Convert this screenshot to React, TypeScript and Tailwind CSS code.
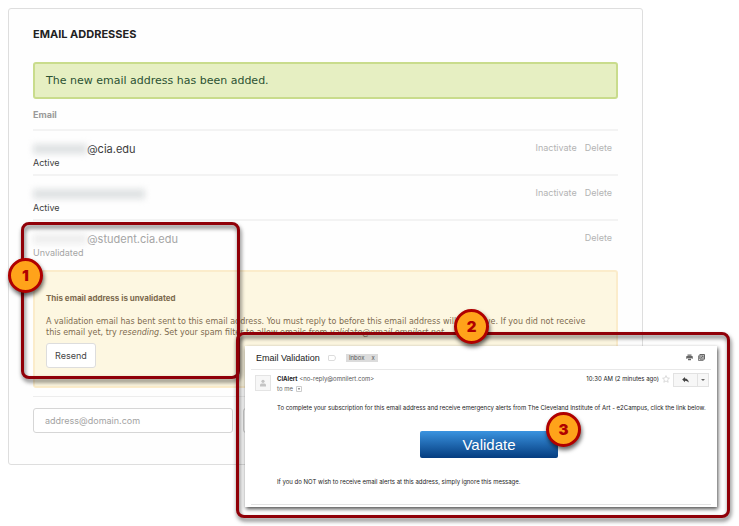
import type { ReactNode } from "react";
import clsx from "clsx";

const emails = [
  { id: 1, domain: "@cia.edu", status: "Active", actions: ["Inactivate", "Delete"] },
  { id: 2, domain: "", status: "Active", actions: ["Inactivate", "Delete"] },
  { id: 3, domain: "@student.cia.edu", status: "Unvalidated", actions: ["Delete"] }
];

function Badge({ children, className }: { children: ReactNode; className: string }) {
  return (
    <div
      className={clsx(
        "absolute flex size-[35px] items-center justify-center rounded-full border-3 border-[#b00000] bg-[#ffa31a] font-[Inter,sans-serif] text-[15px] leading-none font-black text-[#b00000] shadow-[1px_3px_4px_rgba(0,0,0,0.6)]",
        className
      )}
    >
      {children}
    </div>
  );
}

function EmailTable() {
  return (
    <table className="w-full table-fixed border-collapse text-left">
      <thead>
        <tr className="h-[31px] border-b-2 border-[#f3f3f3]">
          <th className="pt-[2px] text-[9px] font-bold text-[#9a9a9a]">Email</th>
          <th className="w-28" aria-label="Actions" />
        </tr>
      </thead>
      <tbody>
        {emails.map((email) => {
          const muted = email.status === "Unvalidated";
          return (
            <tr key={email.id} className={clsx("h-[45px] align-top", !muted && "border-b-2 border-[#f3f3f3]")}>
              <td className={clsx("pt-[11px]", muted ? "text-[#a5a5a5]" : "text-[#3c3c3c]")}>
                <div className="flex h-[14px] items-center text-[11px] leading-[14px]">
                  <span
                    className={clsx(
                      "h-[10px] blur-[3px]",
                      email.domain ? "w-[54px]" : "w-28",
                      muted ? "bg-[#eeeeee]" : "bg-[#dfe2e3]"
                    )}
                  />
                  {email.domain}
                </div>
                <div className="text-[9px] leading-[13px]">{email.status}</div>
              </td>
              <td className="pt-[10px] pr-[6px]">
                <div className="flex justify-end gap-2 text-[9px] leading-[14px] text-[#b3b3b3]">
                  {email.actions.map((action) => (
                    <button key={action} type="button">{action}</button>
                  ))}
                </div>
              </td>
            </tr>
          );
        })}
      </tbody>
    </table>
  );
}

function EmailMessage() {
  return (
    <article className="relative bg-white px-[6px] pb-[2px] text-[6px] text-[#222] shadow-[1px_2px_4px_rgba(0,0,0,0.7)]">
      <header className="flex h-6 items-center border-b border-[#e8e8e8] pr-[6px] pl-[5px]">
        <h2 className="font-['Liberation_Sans',Arial,sans-serif] text-[9px] leading-3">Email Validation</h2>
        <svg className="ml-[8px] h-[6px] w-2" viewBox="0 0 8 6" fill="none" stroke="#dcdcdc">
          <path d="M1 .5h5q1 0 1.500 2.500-.5 2.500-1.500 2.500H1q-.5 0-.5-.5V1q0-.5.5-.5z" />
        </svg>
        <span className="ml-[10px] flex h-2 items-center gap-[7px] bg-[#dcdcdc] px-[3px] text-[#555]">
          Inbox
          <button type="button" aria-label="Remove Inbox label">x</button>
        </span>
        <span className="ml-auto flex gap-[5px]">
          <button type="button" aria-label="Print">
            <svg className="size-[7px]" viewBox="0 0 7 7" fill="#666">
              <path d="M1.5 .6h4v1.100h-4zM.9 2h5.200q.7 0 .7.7v2.100H5.500V3.900h-4v.9H.2V2.700Q.2 2 .9 2zM2 4.400h3v1.900H2z" />
            </svg>
          </button>
          <button type="button" aria-label="Open in new window">
            <svg className="size-[7px]" viewBox="0 0 7 7" fill="none" stroke="#666">
              <path d="M.5 1.500v5h5" strokeWidth=".8" />
              <path d="M1.800.5h4.700v4.700H1.800z" fill="#bbb" />
              <path d="M3 4l2-2M3.500 2H5v1.500" strokeWidth=".8" />
            </svg>
          </button>
        </span>
      </header>

      <div className="flex pt-1 pr-[2px] pl-1">
        <div className="mt-px flex size-4 items-center justify-center border border-[#e4e4e4] bg-[#f7f7f7]">
          <svg className="size-2" viewBox="0 0 8 8" fill="#c4c4c4">
            <circle cx="4" cy="2.3" r="1.6" />
            <path d="M1 7.500V6q0-1.500 1.500-1.500h3q1.500 0 1.500 1.500v1.500z" />
          </svg>
        </div>
        <div className="ml-[6px] leading-[10px]">
          <p><b>CIAlert</b> <span className="text-[#555]">&lt;no-reply@omnilert.com&gt;</span></p>
          <p className="flex items-center gap-[3px] text-[#666]">
            to me
            <button type="button" aria-label="Show details">
              <svg className="size-[6px]" viewBox="0 0 6 6" fill="none" stroke="#ccc">
                <path d="M.5 .5h5v5h-5z" />
                <path d="M1.800 2.300h2.400L3 3.900z" fill="#666" stroke="none" />
              </svg>
            </button>
          </p>
        </div>
        <span className="ml-auto leading-[10px]">10:30 AM (2 minutes ago)</span>
        <button type="button" aria-label="Star" className="mt-[1px] ml-[3px] size-2">
          <svg viewBox="0 0 10 10" fill="none" stroke="#c8c8c8" strokeWidth=".8">
            <path d="M5 .8l1.300 2.900 3 .3-2.300 2 .7 3.100L5 7.500 2.300 9.100 3 6 .7 4l3-.3z" />
          </svg>
        </button>
        <div className="-mt-px ml-[3px] flex h-[14px] border border-[#e2e2e2] bg-[#f7f7f7]">
          <button type="button" aria-label="Reply" className="flex w-6 items-center justify-center border-r border-[#e2e2e2]">
            <svg className="h-[6px] w-[7px]" viewBox="0 0 7 6" fill="#444">
              <path d="M3 0v1.500q3.300.3 3.800 4Q5.300 3.700 3 3.700v1.500L.2 2.600z" />
            </svg>
          </button>
          <button type="button" aria-label="More" className="flex w-[10px] items-center justify-center">
            <svg className="h-[2px] w-1" viewBox="0 0 4 2" fill="#666"><path d="M0 0h4L2 2z" /></svg>
          </button>
        </div>
      </div>

      <div className="pl-[26px]">
        <p className="mt-[9px] leading-[10px]">
          To complete your subscription for this email address and receive emergency alerts from The Cleveland Institute of Art - e2Campus, click the link below.
        </p>
        <div className="flex justify-center pt-[18px] pr-[10px]">
          <div className="relative">
            <button
              type="button"
              className="block h-[27px] w-[138px] rounded-[2px] bg-linear-to-b from-[#3b94e0] to-[#053d80] font-['Liberation_Sans',Arial,sans-serif] text-[15px] leading-none text-white"
            >
              Validate
            </button>
            <Badge className="-top-[19px] -right-[23px]">3</Badge>
          </div>
        </div>
        <p className="mt-[19px] leading-[10px]">
          If you do NOT wish to receive email alerts at this address, simply ignore this message.
        </p>
      </div>
      <hr className="mt-[17px] border-[#e4e4e4]" />
    </article>
  );
}

export default function App() {
  return (
    <div className="relative min-h-screen overflow-hidden bg-white font-[Inter,sans-serif] text-[#333]">
      <main className="pt-2 pr-24 pl-2">
        <section className="rounded-[3px] border border-[#dedede] bg-[#fefefe] px-6 pb-[31px]">
          <h1 className="pt-[17px] text-[11px] leading-4 font-bold text-[#222]">EMAIL ADDRESSES</h1>

          <div role="status" className="mt-5 rounded-[3px] border-2 border-[#c9dc8c] bg-[#e6efc2] px-[11px] py-[9px] font-['DejaVu_Sans',sans-serif] text-[11px] leading-[15px] text-[#2c5232]">
            The new email address has been added.
          </div>

          <EmailTable />

          {/* Warning under the unvalidated address */}
          <div className="mt-[5px] rounded-[3px] border-2 border-[#fbeccb] bg-[#fdf7e1] px-[11px] pt-[21px] pb-[18px] font-['DejaVu_Sans',sans-serif] text-[8px] leading-[11px] text-[#7d6b4f]">
            <h2 className="font-[Inter,sans-serif] font-bold">This email address is unvalidated</h2>
            <p className="mt-3 whitespace-nowrap">
              A validation email has bent sent to this email address. You must reply to before this email address will be active. If you did not receive
              <br />
              this email yet, try <i>resending</i>. Set your spam filter to allow emails from <i>validate@email.omnilert.net</i>.
            </p>
            <button type="button" className="mt-[5px] h-[25px] rounded-[3px] border border-[#ddd] bg-white px-2 font-[Inter,sans-serif] text-[9px] leading-none text-[#444]">
              Resend
            </button>
          </div>

          <form className="mt-2 flex gap-[10px] border-t border-[#ededed] pt-[11px]">
            <input
              type="email"
              aria-label="Email address"
              placeholder="address@domain.com"
              className="h-[25px] w-[200px] rounded-[3px] border border-[#d6d6d6] bg-white px-[11px] text-[9px] placeholder:text-[#a3a3a3]"
            />
            <button type="button" aria-label="Add email address" className="h-[25px] w-16 rounded-[3px] border border-[#ccc] bg-white" />
          </form>
        </section>
      </main>

      {/* Step 1 */}
      <div className="absolute top-[222px] left-[21px] h-[157px] w-[219px]">
        <div className="h-full rounded-lg border-3 border-[#900008] drop-shadow-[1px_3px_2px_rgba(0,0,0,0.6)]" />
        <Badge className="top-[36px] -left-[13px]">1</Badge>
      </div>

      {/* Step 2 */}
      <div className="absolute top-[332px] right-[9px] left-[236px] pt-[14px] pr-[13px] pb-[11px] pl-[9px]">
        <div className="pointer-events-none absolute inset-0 rounded-lg border-3 border-[#900008] drop-shadow-[1px_3px_2px_rgba(0,0,0,0.6)]" />
        <EmailMessage />
        <Badge className="-top-[23px] left-[218px]">2</Badge>
      </div>
    </div>
  );
}
